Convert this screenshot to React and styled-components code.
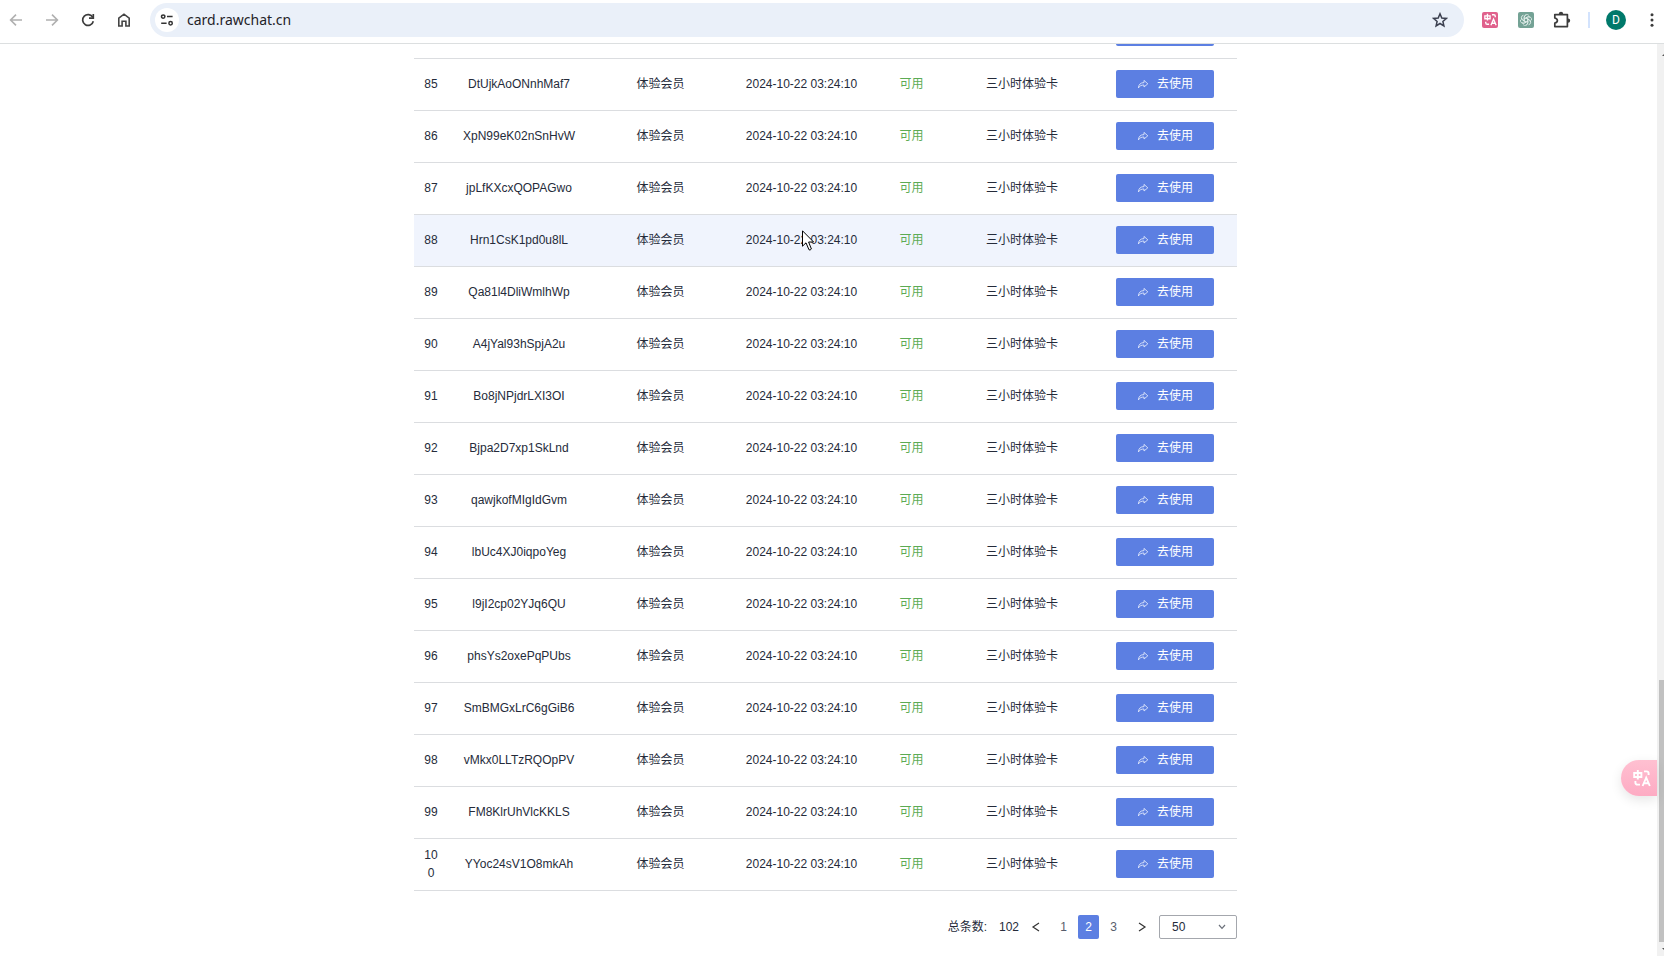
import React, { useState } from 'react';
import styled, { createGlobalStyle } from 'styled-components';

const cards = [
  { id: 85, code: 'DtUjkAoONnhMaf7' },
  { id: 86, code: 'XpN99eK02nSnHvW' },
  { id: 87, code: 'jpLfKXcxQOPAGwo' },
  { id: 88, code: 'Hrn1CsK1pd0u8lL' },
  { id: 89, code: 'Qa81l4DliWmlhWp' },
  { id: 90, code: 'A4jYal93hSpjA2u' },
  { id: 91, code: 'Bo8jNPjdrLXI3OI' },
  { id: 92, code: 'Bjpa2D7xp1SkLnd' },
  { id: 93, code: 'qawjkofMIgIdGvm' },
  { id: 94, code: 'lbUc4XJ0iqpoYeg' },
  { id: 95, code: 'l9jI2cp02YJq6QU' },
  { id: 96, code: 'phsYs2oxePqPUbs' },
  { id: 97, code: 'SmBMGxLrC6gGiB6' },
  { id: 98, code: 'vMkx0LLTzRQOpPV' },
  { id: 99, code: 'FM8KlrUhVlcKKLS' },
  { id: 100, code: 'YYoc24sV1O8mkAh' },
];

const columns = [34, 142, 141, 141, 79, 142, 144];

const BackIcon = () => (
  <svg width="16" height="16" viewBox="0 0 16 16" fill="none" stroke="#b0b0b0" strokeWidth="1.6">
    <path d="M14 8H3M8 2.6L2.6 8L8 13.4" />
  </svg>
);

const ForwardIcon = () => (
  <svg width="16" height="16" viewBox="0 0 16 16" fill="none" stroke="#b0b0b0" strokeWidth="1.6">
    <path d="M2 8H13M8 2.6L13.4 8L8 13.4" />
  </svg>
);

const ReloadIcon = () => (
  <svg width="16" height="16" viewBox="0 0 16 16" fill="none" stroke="#3c3c3c" strokeWidth="1.7">
    <path d="M12.8 5.4A5.4 5.4 0 1 0 13.3 9.2" />
    <path d="M13.3 2V6.2H9" />
  </svg>
);

const HomeIcon = () => (
  <svg width="16" height="16" viewBox="0 0 16 16" fill="none" stroke="#444" strokeWidth="1.6">
    <path d="M2.8 6.2L8 2.2L13.2 6.2V14H9.9V9.2H6.1V14H2.8Z" />
  </svg>
);

const TuneIcon = () => (
  <svg width="14" height="14" viewBox="0 0 14 14" fill="none" stroke="#333" strokeWidth="1.5">
    <circle cx="3.2" cy="3.6" r="1.7" />
    <path d="M7 3.6H12.6M1.2 10.2H6.6" />
    <circle cx="10.6" cy="10.2" r="1.7" />
  </svg>
);

const StarIcon = () => (
  <svg width="16" height="16" viewBox="0 0 16 16" fill="none" stroke="#3c4050" strokeWidth="1.5">
    <path d="M8 1.8L9.8 6L14.3 6.4L10.9 9.4L11.9 13.9L8 11.5L4.1 13.9L5.1 9.4L1.7 6.4L6.2 6Z" />
  </svg>
);

const TranslateIcon = ({ size }) => (
  <svg width={size} height={size} viewBox="0 0 18 18" fill="none" stroke="#fff" strokeWidth="1.9">
    <path d="M1.2 4H8.4V8H1.2ZM4.8 1V10.4" />
    <path d="M11 2.4H13.6Q15.6 2.4 15.6 4.6V6" />
    <path d="M2.4 12V13.4Q2.4 15.6 4.6 15.6H7" />
    <path d="M9.6 17L13.2 8.6L16.8 17M11 14.2H15.4" />
  </svg>
);

const KnotIcon = () => (
  <svg width="14" height="14" viewBox="0 0 14 14" fill="none" stroke="#e4efec" strokeWidth="0.8">
    {[0, 60, 120, 180, 240, 300].map((turn) => (
      <path
        key={turn}
        transform={`rotate(${turn} 7 7)`}
        d="M5.2 8V4.2A2.7 2.7 0 0 1 9.9 2.4M5.2 5.9L8.2 4.2A2.7 2.7 0 0 1 11.2 4.4"
      />
    ))}
  </svg>
);

const PuzzleIcon = () => (
  <svg width="18" height="18" viewBox="0 0 18 18" fill="#3c3c3c" stroke="#3c3c3c" strokeWidth="1.7">
    <path fill="none" strokeLinejoin="round" d="M1.8 3.6H14.4V15.6H1.8V12.2Q4.4 11.6 4.4 9.6T1.8 7Z" />
    <path stroke="none" d="M5.8 3A2.2 2.2 0 0 1 10.2 3ZM15 7.4A2.2 2.2 0 0 1 15 11.8Z" />
  </svg>
);

const DotsIcon = () => (
  <svg width="16" height="16" viewBox="0 0 16 16" fill="#3c3c3c">
    <circle cx="8" cy="2.8" r="1.5" />
    <circle cx="8" cy="8" r="1.5" />
    <circle cx="8" cy="13.2" r="1.5" />
  </svg>
);

const ShareIcon = () => (
  <svg width="12" height="12" viewBox="0 0 12 12" fill="none" stroke="#dfe7fb" strokeWidth="0.9" strokeLinejoin="round">
    <path d="M1.4 10C1.6 6.6 3.4 4.6 7 4.6V2.4L10.8 5.8L7 9V7C4.4 7 2.6 7.8 1.4 10Z" />
  </svg>
);

const Chevron = ({ d, color = '#333' }) => (
  <svg width="10" height="10" viewBox="0 0 10 10" fill="none" stroke={color} strokeWidth="1.2">
    <path d={d} />
  </svg>
);

const CursorIcon = () => (
  <svg width="13" height="21" viewBox="0 0 13 21" fill="#fff" stroke="#000" strokeWidth="1">
    <path d="M0.5 0.8V16.2L4 12.8L7 19.8Q8 20.6 9.4 19L6.6 12H11.6Z" />
  </svg>
);

const App = () => {
  const [page, setPage] = useState(2);
  const [pageSize, setPageSize] = useState('50');

  return (
    <Window>
      <GlobalStyle />
      <Toolbar>
        <NavButton aria-label="Back"><BackIcon /></NavButton>
        <NavButton aria-label="Forward"><ForwardIcon /></NavButton>
        <NavButton aria-label="Reload"><ReloadIcon /></NavButton>
        <NavButton aria-label="Home"><HomeIcon /></NavButton>
        <AddressBar>
          <SiteInfo aria-label="Site information"><TuneIcon /></SiteInfo>
          <Address aria-label="Address" defaultValue="card.rawchat.cn" />
          <NavButton aria-label="Bookmark"><StarIcon /></NavButton>
        </AddressBar>
        <Extensions>
          <NavButton aria-label="Translate"><Badge color="#e0618c"><TranslateIcon size={13} /></Badge></NavButton>
          <NavButton aria-label="Assistant"><Badge color="#74a295"><KnotIcon /></Badge></NavButton>
          <NavButton aria-label="Extensions"><PuzzleIcon /></NavButton>
        </Extensions>
        <Divider />
        <NavButton aria-label="Profile"><Avatar>D</Avatar></NavButton>
        <MenuButton aria-label="Menu"><DotsIcon /></MenuButton>
      </Toolbar>

      <Body>
        <Page>
          <Content>
            <Table>
              <colgroup>
                {columns.map((width, i) => <Col key={i} width={width} />)}
              </colgroup>
              <tbody>
                <Row>
                  <Cell colSpan={6} />
                  <Cell><UseButton aria-label="去使用" /></Cell>
                </Row>
                {cards.map((card) => (
                  <Row key={card.id} active={card.id === 88}>
                    <Cell>{card.id}</Cell>
                    <Cell>{card.code}</Cell>
                    <Cell>体验会员</Cell>
                    <Cell>
                      2024-10-22 03:24:10
                      {card.id === 88 && <Cursor><CursorIcon /></Cursor>}
                    </Cell>
                    <Cell><Status>可用</Status></Cell>
                    <Cell>三小时体验卡</Cell>
                    <Cell><UseButton><ShareIcon />去使用</UseButton></Cell>
                  </Row>
                ))}
              </tbody>
            </Table>
            <Pagination>
              <Total>总条数:<span>102</span></Total>
              <Arrow aria-label="Previous page" onClick={() => setPage(Math.max(1, page - 1))}>
                <Chevron d="M8 1L2 5L8 9" />
              </Arrow>
              <Pages>
                {[1, 2, 3].map((n) => (
                  <PageButton key={n} current={page === n} onClick={() => setPage(n)}>{n}</PageButton>
                ))}
              </Pages>
              <Arrow aria-label="Next page" onClick={() => setPage(Math.min(3, page + 1))}>
                <Chevron d="M2 1L8 5L2 9" />
              </Arrow>
              <SizeBox>
                <SizeSelect aria-label="Page size" value={pageSize} onChange={(e) => setPageSize(e.target.value)}>
                  <option>50</option>
                </SizeSelect>
                <SizeArrow><Chevron color="#6b707a" d="M2 3L5 6.4L8 3" /></SizeArrow>
              </SizeBox>
            </Pagination>
          </Content>
        </Page>
        <TranslateTab aria-label="Translate page"><TranslateIcon size={18} /></TranslateTab>
        <Scrollbar>
          <ScrollArrow up />
          <ScrollSpace />
          <Thumb />
          <ScrollArrow />
        </Scrollbar>
      </Body>
    </Window>
  );
}

export default App;

const GlobalStyle = createGlobalStyle`
  * {
    box-sizing: border-box;
  }
  body {
    margin: 0;
    background: #fff;
    color: #252b3a;
    font-family: "Liberation Sans", "Noto Sans CJK SC", sans-serif;
    font-size: 12px;
    line-height: 18px;
  }
  button, input, select {
    font: inherit;
    color: inherit;
    border: 0;
    padding: 0;
    background: none;
  }
  button {
    cursor: pointer;
  }
  svg {
    display: block;
    flex: none;
  }
`;

const Window = styled.div`
  display: flex;
  flex-direction: column;
  height: 100vh;
  overflow: hidden;
`;

const Toolbar = styled.header`
  display: flex;
  align-items: center;
  flex: none;
  height: 44px;
  padding: 0 0 4px 2px;
  border-bottom: 1px solid #dcdfe0;
`;

const NavButton = styled.button`
  display: flex;
  align-items: center;
  justify-content: center;
  flex: none;
  width: 28px;
  height: 28px;
  margin-right: 8px;
`;

const MenuButton = styled(NavButton)`
  width: 24px;
  margin: 0 0 0 2px;
`;

const AddressBar = styled.div`
  display: flex;
  align-items: center;
  flex: 1;
  height: 34px;
  margin-left: 4px;
  padding: 0 2px 0 5px;
  border-radius: 17px;
  background: #eaf0f9;
`;

const SiteInfo = styled.button`
  display: flex;
  align-items: center;
  justify-content: center;
  width: 24px;
  height: 24px;
  border-radius: 50%;
  background: #fff;
`;

const Address = styled.input`
  flex: 1;
  margin-left: 8px;
  color: #1f2328;
  font-family: "Noto Sans", sans-serif;
  font-size: 14px;
  line-height: 20px;
  outline: none;
`;

const Extensions = styled.div`
  display: flex;
  margin-left: 12px;
`;

const Badge = styled.span`
  display: flex;
  align-items: center;
  justify-content: center;
  width: 16px;
  height: 16px;
  border-radius: 2px;
  background: ${props => props.color};
`;

const Divider = styled.div`
  width: 2px;
  height: 16px;
  margin: 0 12px 0 4px;
  background: #d3e3fd;
`;

const Avatar = styled.span`
  width: 20px;
  height: 20px;
  border-radius: 50%;
  background: #00796b;
  color: #fff;
  font-family: Roboto, sans-serif;
  font-size: 12px;
  line-height: 20px;
`;

const Body = styled.div`
  position: relative;
  display: flex;
  flex: 1;
  min-height: 0;
`;

const Page = styled.main`
  display: flex;
  flex-direction: column;
  justify-content: flex-end;
  align-items: center;
  flex: 1;
  padding: 0 6px 17px 0;
  overflow: hidden;
`;

const Content = styled.div`
  width: 100%;
  max-width: 823px;
`;

const Table = styled.table`
  width: 100%;
  table-layout: fixed;
  border-collapse: separate;
  border-spacing: 0;
`;

const Col = styled.col`
  width: ${props => props.width}px;
`;

const Row = styled.tr`
  background: ${props => props.active ? "#f0f4fd" : "#fff"};
`;

const Cell = styled.td`
  position: relative;
  height: 52px;
  padding: 0 10px 1px;
  border-bottom: 1px solid #dbdde0;
  text-align: center;
  vertical-align: middle;
  word-break: break-all;
`;

const Status = styled.span`
  color: #5cab54;
`;

const UseButton = styled.button`
  display: flex;
  align-items: center;
  justify-content: center;
  gap: 8px;
  width: 98px;
  height: 28px;
  margin: 0 auto;
  border-radius: 2px;
  background: #5c7fe2;
  color: #fff;
`;

const Cursor = styled.span`
  position: absolute;
  left: 50%;
  top: 15px;
  pointer-events: none;
`;

const Pagination = styled.nav`
  display: flex;
  align-items: center;
  justify-content: flex-end;
  height: 24px;
  margin-top: 24px;
`;

const Total = styled.div`
  display: flex;
  gap: 12px;
`;

const Arrow = styled.button`
  display: flex;
  align-items: center;
  justify-content: center;
  width: 34px;
  height: 24px;
`;

const Pages = styled.div`
  display: flex;
  gap: 4px;
  margin-right: 1px;
`;

const PageButton = styled.button`
  width: 21px;
  height: 24px;
  border-radius: 2px;
  background: ${props => props.current ? "#5c7fe2" : "transparent"};
  color: ${props => props.current ? "#fff" : "#575d6c"};
`;

const SizeBox = styled.div`
  position: relative;
`;

const SizeSelect = styled.select`
  display: block;
  width: 78px;
  height: 24px;
  padding: 0 12px;
  border: 1px solid #a4a7ad;
  border-radius: 2px;
  appearance: none;
`;

const SizeArrow = styled.span`
  position: absolute;
  top: 7px;
  right: 10px;
  pointer-events: none;
`;

const TranslateTab = styled.button`
  position: absolute;
  right: 7px;
  bottom: 160px;
  display: flex;
  align-items: center;
  width: 36px;
  height: 36px;
  padding-left: 12px;
  border-radius: 18px 0 0 18px;
  background: linear-gradient(#ffc0d1, #fdabc3);
  box-shadow: 0 4px 12px rgba(0, 0, 0, 0.1);
`;

const Scrollbar = styled.div`
  display: flex;
  flex-direction: column;
  flex: none;
  width: 7px;
  padding-left: 2px;
  background: #f1f1f1;
  overflow: hidden;
`;

const ScrollArrow = styled.span`
  flex: none;
  width: 8px;
  height: 4px;
  margin: ${props => props.up ? "8px 0 2px 3px" : "6px 0 4px 3px"};
  border: 4px solid transparent;
  border-top: ${props => props.up ? "0" : "4px solid #555"};
  border-bottom: ${props => props.up ? "4px solid #555" : "0"};
`;

const ScrollSpace = styled.div`
  flex: 622;
`;

const Thumb = styled.div`
  flex: 262;
  background: #c1c1c1;
`;
